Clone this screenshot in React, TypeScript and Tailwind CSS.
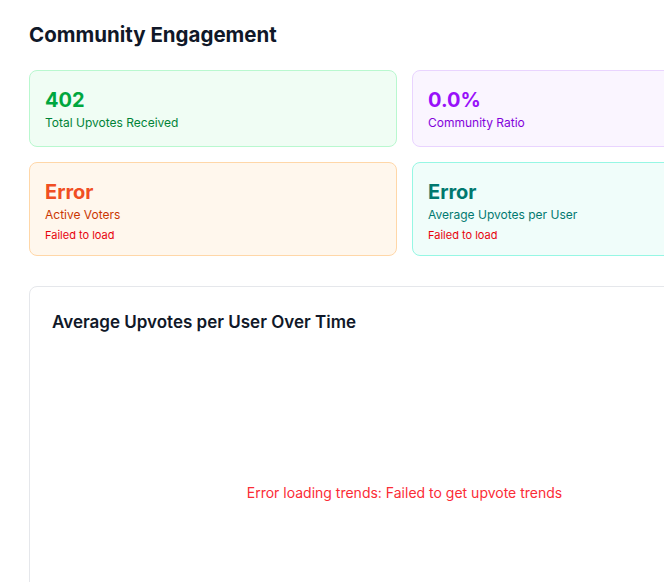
export default function App() {
  return (
    <div className="w-[664px] h-[582px] overflow-hidden bg-white" style={{ fontFamily: "Inter, 'Noto Sans', sans-serif" }}>
      <div className="w-[809px] px-[29px] pt-[21px]">
        <h1 className="text-[20.5px] leading-7 font-bold text-gray-900 mb-[21px]">Community Engagement</h1>

        {/* Stat cards */}
        <div className="grid grid-cols-2 gap-x-[15px] gap-y-[15px]">
          <div className="rounded-lg border border-green-200 bg-green-50 px-[15px] pt-[15px] pb-[15px]">
            <div className="text-xl leading-7 font-bold text-green-600">402</div>
            <div className="mt-px text-xs leading-4 text-green-700">Total Upvotes Received</div>
          </div>
          <div className="rounded-lg border border-purple-200 bg-purple-50 px-[15px] pt-[15px] pb-[15px]">
            <div className="text-xl leading-7 font-bold text-purple-600">0.0%</div>
            <div className="mt-px text-xs leading-4 text-purple-700">Community Ratio</div>
          </div>
          <div className="rounded-lg border border-orange-200 bg-orange-50 px-[15px] pt-[15px] pb-[13px]">
            <div className="text-xl leading-7 font-bold text-[#f04e23]">Error</div>
            <div className="mt-px text-xs leading-4 text-orange-700">Active Voters</div>
            <div className="mt-[5px] text-[11px] leading-[14px] text-red-600">Failed to load</div>
          </div>
          <div className="rounded-lg border border-teal-200 bg-teal-50 px-[15px] pt-[15px] pb-[13px]">
            <div className="text-xl leading-7 font-bold text-teal-700">Error</div>
            <div className="mt-px text-xs leading-4 text-teal-700">Average Upvotes per User</div>
            <div className="mt-[5px] text-[11px] leading-[14px] text-red-600">Failed to load</div>
          </div>
        </div>

        {/* Trend chart */}
        <div className="mt-[30px] rounded-lg border border-gray-200 bg-white p-[22px]">
          <h2 className="text-[17px] leading-6 font-semibold text-gray-900 mb-4 pt-px">Average Upvotes per User Over Time</h2>
          <div className="h-[286px] flex items-center justify-center">
            <p className="text-sm text-red-500">Error loading trends: Failed to get upvote trends</p>
          </div>
        </div>
      </div>
    </div>
  );
}
